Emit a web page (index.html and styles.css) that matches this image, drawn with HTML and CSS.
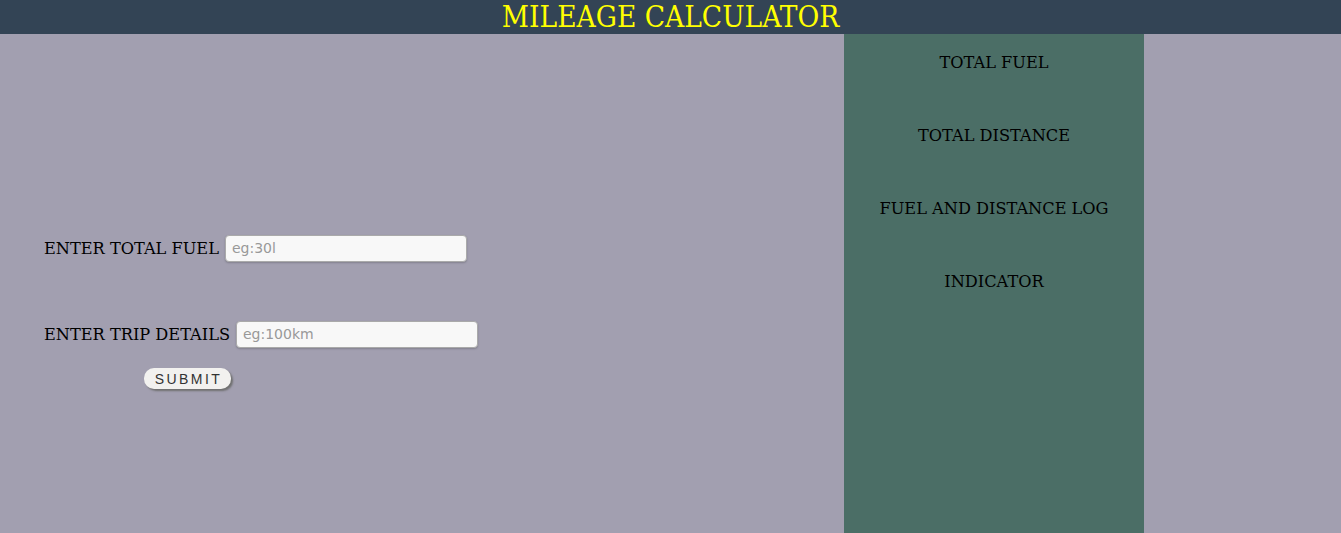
FILE: index.html
```html
<!DOCTYPE html>
<html>
<head>
<meta charset="utf-8">
<title>Mileage Calculator</title>
<link rel="stylesheet" href="styles.css">
</head>
<body>
<header class="header"><h1 class="title">MILEAGE CALCULATOR</h1></header>
<main class="main">
  <section class="form-area">
    <div class="row row-fuel">
      <label class="label" for="fuel">ENTER TOTAL FUEL</label>
      <input class="field" id="fuel" type="text" placeholder="eg:30l">
    </div>
    <div class="row row-trip">
      <label class="label" for="trip">ENTER TRIP DETAILS</label>
      <input class="field" id="trip" type="text" placeholder="eg:100km">
    </div>
    <div class="submit-row">
      <button class="submit" type="button">SUBMIT</button>
    </div>
  </section>
  <aside class="sidebar">
    <p class="side-item">TOTAL FUEL</p>
    <p class="side-item">TOTAL DISTANCE</p>
    <p class="side-item">FUEL AND DISTANCE LOG</p>
    <p class="side-item">INDICATOR</p>
  </aside>
  <div class="filler"></div>
</main>
</body>
</html>
```
FILE: styles.css
```css
html, body {
  margin: 0;
  padding: 0;
  height: 100%;
}
body {
  background: #a29fb0;
  font-family: "DejaVu Serif", serif;
  color: #000;
  overflow: hidden;
}
.header {
  background: #334455;
  height: 34px;
  display: flex;
  justify-content: center;
  align-items: center;
}
.title {
  margin: 0;
  font-family: "DejaVu Serif Condensed", "DejaVu Serif", serif;
  font-stretch: condensed;
  font-weight: normal;
  font-size: 29.5px;
  color: #ffff00;
  line-height: 34px;
}
.main {
  display: flex;
  height: calc(100% - 34px);
}
.form-area {
  width: 844px;
  flex: none;
  padding: 200px 0 0 44px;
  box-sizing: border-box;
}
.row {
  display: flex;
  align-items: center;
  gap: 6px;
  height: 28px;
}
.row-trip {
  margin-top: 58px;
}
.label {
  font-size: 16.2px;
}
.field {
  width: 242px;
  height: 27px;
  box-sizing: border-box;
  border: 1px solid #aaaaaa;
  border-radius: 4px;
  background: #f8f8f8;
  padding: 0 6px;
  font-family: "DejaVu Sans", sans-serif;
  font-size: 14px;
  box-shadow: 0 1px 2px rgba(0,0,0,0.2);
}
.field::placeholder {
  color: #999;
}
.submit-row {
  padding: 20px 0 0 100px;
}
.submit {
  width: 87px;
  height: 21px;
  border: none;
  border-radius: 10px;
  background: #f2f1ef;
  font-family: "Liberation Sans", sans-serif;
  font-size: 14px;
  letter-spacing: 2.4px;
  color: #333;
  box-shadow: 2px 2px 2px #707070;
  padding: 0 0 0 2px;
}
.sidebar {
  width: 300px;
  flex: none;
  background: #4b6e66;
  text-align: center;
  padding-top: 18px;
  box-sizing: border-box;
}
.side-item {
  font-size: 16.2px;
  margin: 0 0 51px;
  line-height: 22px;
}
.filler {
  flex: 1;
}
```
